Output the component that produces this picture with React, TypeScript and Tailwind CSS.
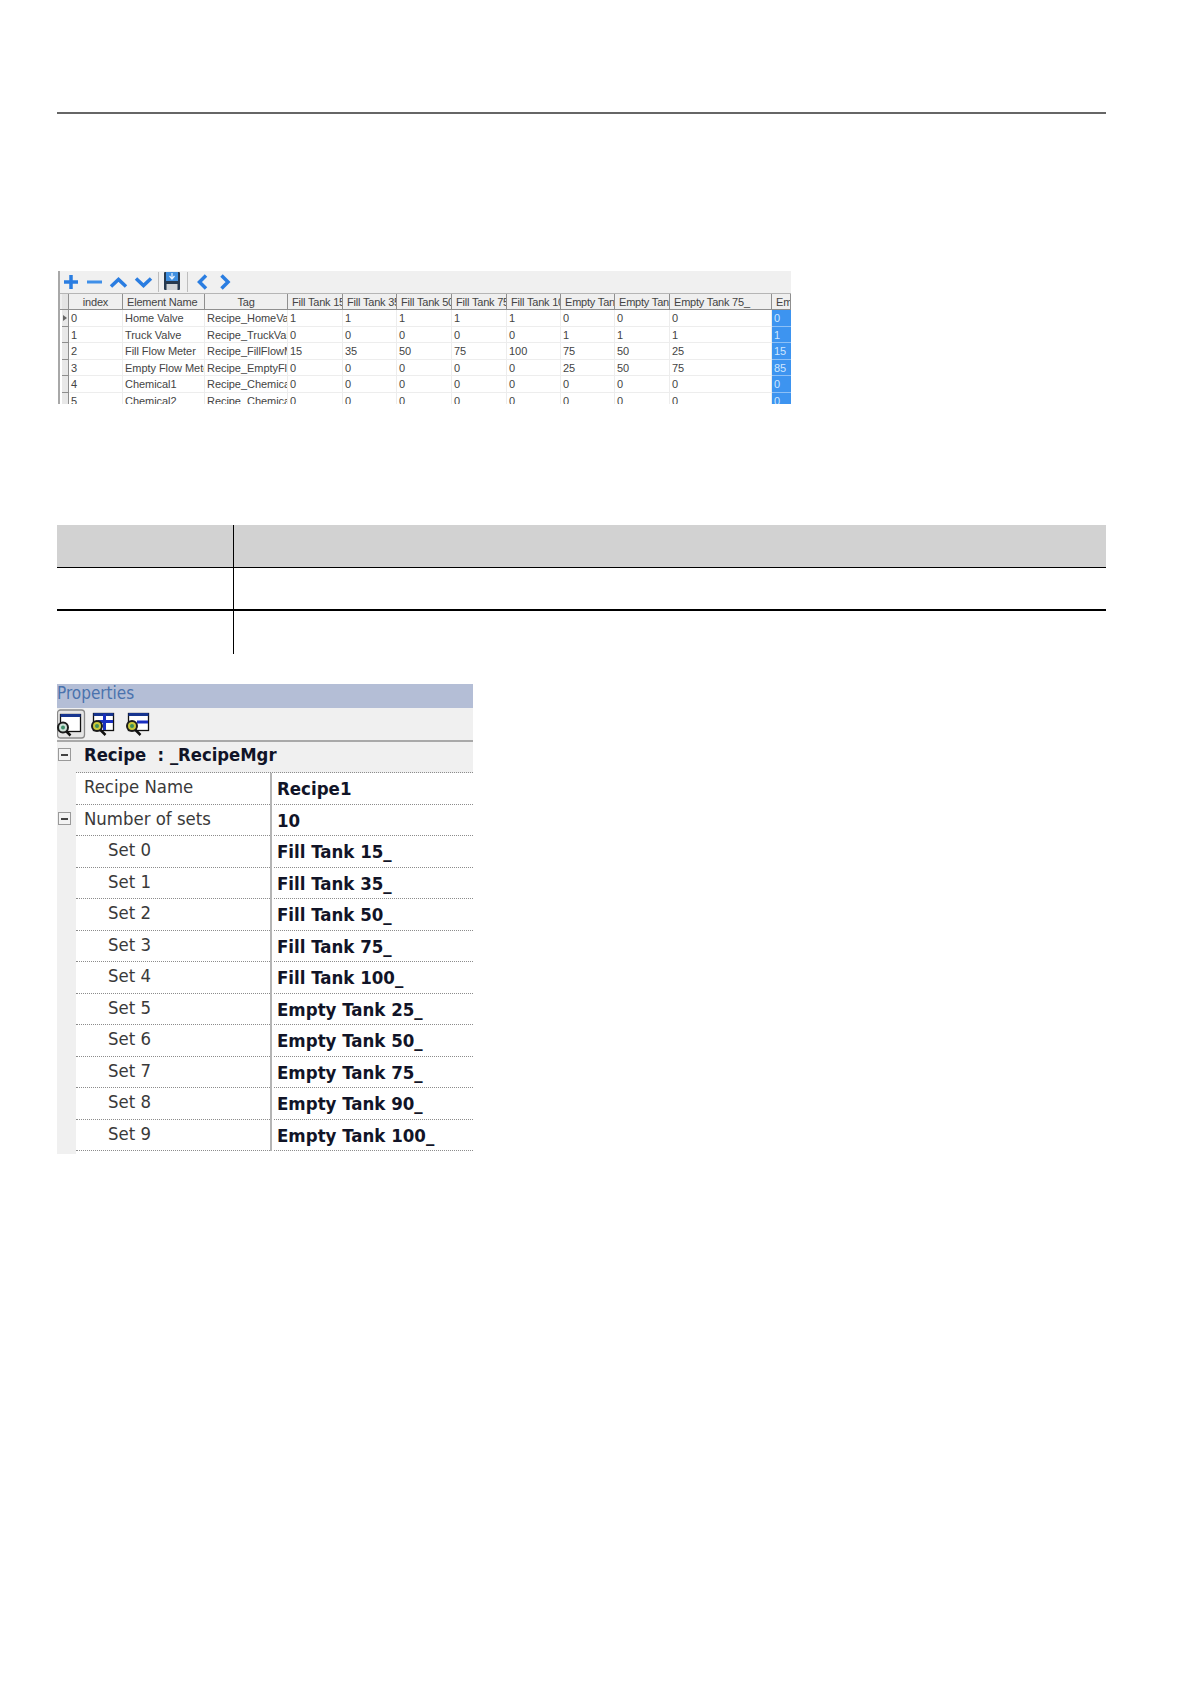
import React from "react";

const cols = [
  { w: 9, label: "" },
  { w: 54, label: "index", center: true },
  { w: 82, label: "Element Name" },
  { w: 83, label: "Tag", center: true },
  { w: 55, label: "Fill Tank 15" },
  { w: 54, label: "Fill Tank 35" },
  { w: 55, label: "Fill Tank 50" },
  { w: 55, label: "Fill Tank 75" },
  { w: 54, label: "Fill Tank 100" },
  { w: 54, label: "Empty Tank" },
  { w: 55, label: "Empty Tank" },
  { w: 102, label: "Empty Tank 75_" },
  { w: 19, label: "Empty" },
];

const rows = [
  ["0", "Home Valve", "Recipe_HomeValve", "1", "1", "1", "1", "1", "0", "0", "0", "0"],
  ["1", "Truck Valve", "Recipe_TruckValve", "0", "0", "0", "0", "0", "1", "1", "1", "1"],
  ["2", "Fill Flow Meter", "Recipe_FillFlowMeter", "15", "35", "50", "75", "100", "75", "50", "25", "15"],
  ["3", "Empty Flow Meter", "Recipe_EmptyFlow", "0", "0", "0", "0", "0", "25", "50", "75", "85"],
  ["4", "Chemical1", "Recipe_Chemical1", "0", "0", "0", "0", "0", "0", "0", "0", "0"],
  ["5", "Chemical2", "Recipe_Chemical2", "0", "0", "0", "0", "0", "0", "0", "0", "0"],
];

const sets = [
  "Fill Tank 15_", "Fill Tank 35_", "Fill Tank 50_", "Fill Tank 75_", "Fill Tank 100_",
  "Empty Tank 25_", "Empty Tank 50_", "Empty Tank 75_", "Empty Tank 90_", "Empty Tank 100_",
];

function Toolbar() {
  return (
    <div className="h-[22px] bg-[#f0f0f0] flex items-center">
      <svg width="190" height="22" viewBox="0 0 190 22" fill="none">
        <g transform="translate(-1 0)">
          <path d="M12 4v14M5 11h14" stroke="#2a7de1" strokeWidth="3.500" />
          <path d="M28 11h15" stroke="#3f8fe8" strokeWidth="3" />
          <path d="M52 15.500l7.500-7 7.500 7" stroke="#2a7de1" strokeWidth="3.500" />
          <path d="M77 7.500l7.500 7 7.500-7" stroke="#2a7de1" strokeWidth="3.500" />
          <path d="M99.500 1v20" stroke="#bdbdbd" />
          <rect x="105" y="1" width="16" height="18" rx="1" fill="#26394f" />
          <rect x="107" y="1" width="12" height="9" fill="#3f8fe0" />
          <path d="M113 2v5M110.500 5l2.500 3 2.500-3" stroke="#e8f2ff" strokeWidth="1.200" />
          <rect x="107.500" y="13" width="11" height="6" fill="#cfd3d6" />
          <path d="M128.500 1v20" stroke="#bdbdbd" />
          <path d="M147 4.500l-6.500 6.500 6.500 6.500" stroke="#2a7de1" strokeWidth="3.500" />
          <path d="M162.500 4.500l6.500 6.500-6.500 6.500" stroke="#2a7de1" strokeWidth="3.500" />
        </g>
      </svg>
    </div>
  );
}

function Grid() {
  return (
    <div className="w-[734px] h-[133px] pl-[1px] overflow-hidden">
      <div className="h-full border-l-2 border-[#a8a8a8] font-['Liberation_Sans',sans-serif] text-[11px] text-[#444]">
        <Toolbar />
        <div className="flex h-[17px] bg-[#efefef] border-t border-[#b5b5b5] border-b border-b-[#8f8f8f] tracking-[-0.2px]">
          <div className="w-[7px] ml-[2px] shrink-0 bg-[#e4e4e4] border-r border-[#8f8f8f]" />
          {cols.slice(1).map((c, i) => (
            <div
              key={i}
              style={{ width: c.w }}
              className={`shrink-0 overflow-hidden whitespace-nowrap leading-[16px] border-r border-[#8f8f8f] ${c.center ? "text-center" : "pl-[4px]"}`}
            >
              {c.label}
            </div>
          ))}
        </div>
        {rows.map((r, ri) => (
          <div key={ri} className="flex h-[16.500px] bg-white tracking-[-0.05px]">
            <div className="w-[7px] ml-[2px] shrink-0 bg-[#e8e8e8] border-r border-b border-[#8f8f8f] flex items-center justify-center">
              {ri === 0 && <div className="w-0 h-0 border-y-[3px] border-y-transparent border-l-[4px] border-l-[#666]" />}
            </div>
            {r.map((v, ci) => {
              const sel = ci === 11;
              return (
                <div
                  key={ci}
                  style={{ width: cols[ci + 1].w }}
                  className={`shrink-0 overflow-hidden whitespace-nowrap leading-[16px] pl-[2px] border-b ${sel ? "bg-[#3d94f0] text-[#cfe6ff] border-[#8dc0f6]" : "border-r border-[#ededed]"}`}
                >
                  {v}
                </div>
              );
            })}
          </div>
        ))}
      </div>
    </div>
  );
}

function DefTable() {
  return (
    <div className="w-[1049px] grid grid-cols-[177px_1fr]">
      <div className="h-[43px] bg-[#d2d2d2] border-b border-black border-r" />
      <div className="h-[43px] bg-[#d2d2d2] border-b border-black" />
      <div className="h-[43px] border-b-2 border-black border-r" />
      <div className="h-[43px] border-b-2 border-black" />
      <div className="h-[43px] border-r border-black" />
      <div className="h-[43px]" />
    </div>
  );
}

function Minus() {
  return (
    <div className="w-[13px] h-[13px] ml-[1px] bg-[#f3f3f3] border border-[#9a9a9a] flex items-center justify-center">
      <div className="w-[7px] h-[2px] bg-[#444]" />
    </div>
  );
}

function Win({ x, w }: { x: number; w: number }) {
  return (
    <>
      <rect x={x} y="5.500" width={w} height="17" fill="#fff" stroke="#111" strokeWidth="1.300" />
      <rect x={x} y="5" width={w} height="3" fill="#17358f" />
    </>
  );
}

function Magnifier({ x }: { x: number }) {
  return (
    <>
      <circle cx={x} cy="18" r="5" fill="#c9c93a" stroke="#1c1c1c" strokeWidth="2" />
      <circle cx={x} cy="18" r="2" fill="#3f8f5a" />
      <path d={`M${x + 3.500} 22l5 5`} stroke="#111" strokeWidth="2.500" />
    </>
  );
}

function PropToolbar() {
  return (
    <div className="h-[34px] bg-[#f0f0f0] border-b-2 border-[#a9a9a9]">
      <svg width="110" height="32" viewBox="0 0 110 32" fill="none">
        <rect x="0.500" y="2" width="27" height="28" rx="3" fill="#e6e6e6" stroke="#8a8a8a" strokeWidth="1.300" />
        <rect x="3.500" y="6.500" width="20" height="17" fill="#fff" stroke="#111" strokeWidth="1.300" />
        <rect x="3.500" y="6" width="20" height="3" fill="#17358f" />
        <circle cx="6" cy="19.500" r="5" fill="#cfe0d8" stroke="#1c1c1c" strokeWidth="2" />
        <circle cx="6" cy="19.500" r="2" fill="#3f8f6a" />
        <path d="M9.500 23.500l4 4" stroke="#111" strokeWidth="2.500" />
        <Win x={36.500} w={20} />
        <path d="M47.500 6v16M41 13.500h15" stroke="#1a2fc0" strokeWidth="3" />
        <Magnifier x={40} />
        <Win x={71.500} w={20} />
        <path d="M80 14h11" stroke="#1a2fc0" strokeWidth="3" />
        <Magnifier x={75} />
      </svg>
    </div>
  );
}

function PropRow({ name, value, minus, indent }: { name: string; value: string; minus?: boolean; indent?: boolean }) {
  return (
    <div className="flex h-[31.500px]">
      <div className="w-[19px] shrink-0 bg-[#f0f0f0] flex items-center pb-[3px]">
        {minus && <Minus />}
      </div>
      <div className="w-[194px] shrink-0 bg-white border-b border-dotted border-[#8c8c8c]">
        <div className={`leading-[28px] text-[18.400px] text-[#3a3a3a] font-['DejaVu_Sans_Condensed','DejaVu_Sans',sans-serif] ${indent ? "pl-[32px]" : "pl-[8px]"}`}>
          {name}
        </div>
      </div>
      <div className="w-[2px] shrink-0 bg-[#b5b5b5]" />
      <div className="w-[2px] shrink-0 bg-white" />
      <div className="flex-1 bg-white border-b border-dotted border-[#8c8c8c]">
        <div className="leading-[32px] pl-[3px] text-[18.500px] font-bold text-[#111427] font-['DejaVu_Sans_Condensed','DejaVu_Sans',sans-serif] whitespace-nowrap">
          {value}
        </div>
      </div>
    </div>
  );
}

function Properties() {
  return (
    <div className="w-[416px]">
      <div className="h-[24px] bg-[#b4bed6] text-[#4a72ad] text-[17px] leading-[19px] font-['DejaVu_Sans_Condensed','DejaVu_Sans',sans-serif]">
        Properties
      </div>
      <PropToolbar />
      <div className="h-[31px] bg-[#f0f0f0] flex">
        <div className="w-[19px] pt-[6px]"><Minus /></div>
        <div className="flex-1 border-b border-dotted border-[#8c8c8c] pl-[8px] leading-[25px] text-[18.300px] font-bold text-[#111427] font-['DejaVu_Sans_Condensed','DejaVu_Sans',sans-serif] whitespace-pre">
          Recipe  : _RecipeMgr
        </div>
      </div>
      <PropRow name="Recipe Name" value="Recipe1" />
      <PropRow name="Number of sets" value="10" minus />
      {sets.map((s, i) => (
        <PropRow key={i} name={`Set ${i}`} value={s} indent />
      ))}
      <div className="w-[19px] h-[3px] bg-[#f0f0f0]" />
    </div>
  );
}

export default function App() {
  return (
    <div className="w-[1191px] h-[1684px] bg-white pl-[57px] pt-[112px]">
      <div className="w-[1049px] h-[2px] bg-[#666]" />
      <div className="mt-[157px]"><Grid /></div>
      <div className="mt-[121px]"><DefTable /></div>
      <div className="mt-[30px]"><Properties /></div>
    </div>
  );
}
